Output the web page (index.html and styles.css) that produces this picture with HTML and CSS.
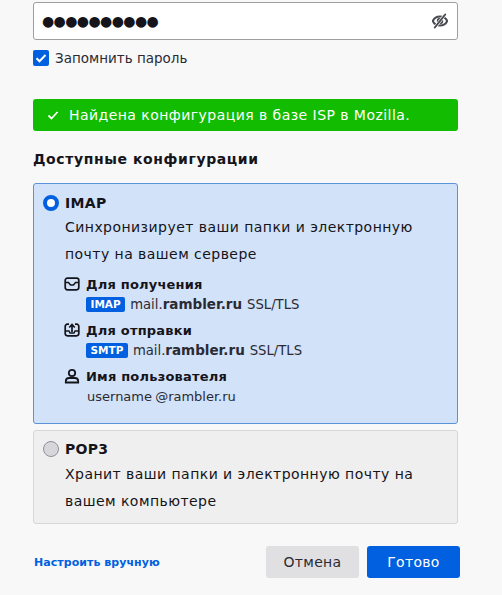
FILE: index.html
```html
<!DOCTYPE html>
<html lang="ru">
<head>
<meta charset="utf-8">
<title>Настройка почты</title>
<link rel="stylesheet" href="styles.css">
</head>
<body>
<main class="page">
  <div class="pass-input">
    <span class="dots">●●●●●●●●●●</span>
    <svg class="eye" viewBox="0 0 16 16" width="16" height="16"><path d="M8 3.500C4.500 3.500 1.800 5.600.8 8c1 2.400 3.700 4.500 7.200 4.500s6.200-2.100 7.200-4.500C14.200 5.600 11.500 3.500 8 3.500Z" fill="none" stroke="#4a4a52" stroke-width="2"/><circle cx="8" cy="8" r="3.200" fill="#4a4a52"/><path d="M2.500 15 13.500 1" stroke="#fff" stroke-width="3"/><path d="M2.800 14.500 13.200 1.500" stroke="#4a4a52" stroke-width="2" stroke-linecap="round"/></svg>
  </div>
  <label class="remember">
    <span class="checkbox"><svg viewBox="0 0 16 16" width="16" height="16"><path d="M3.500 8.200 6.500 11.200 12.500 5" fill="none" stroke="#fff" stroke-width="2"/></svg></span>
    Запомнить пароль
  </label>
  <div class="notice">
    <svg viewBox="0 0 12 12" width="12" height="12"><path d="M1.500 6.500 4.500 9.500 10.500 3" fill="none" stroke="#fff" stroke-width="1.800"/></svg>
    <span>Найдена конфигурация в базе ISP в Mozilla.</span>
  </div>
  <h2 class="section-title">Доступные конфигурации</h2>

  <section class="option selected">
    <div class="option-head"><span class="radio on"></span><strong>IMAP</strong></div>
    <p class="desc">Синхронизирует ваши папки и электронную почту на вашем сервере</p>
    <div class="details">
      <div class="detail-title">
        <svg viewBox="0 0 16 16" width="16" height="16"><rect x="1.200" y="2.200" width="13.600" height="11.600" rx="2.200" fill="none" stroke="#15141a" stroke-width="1.700"/><path d="M1.500 6.500H4.500L6.500 9H9.500L11.500 6.500H14.500" fill="none" stroke="#15141a" stroke-width="1.500"/></svg>
        Для получения
      </div>
      <div class="server"><span class="badge">IMAP</span><span>mail.<b>rambler.ru</b></span><span>SSL/TLS</span></div>
      <div class="detail-title gap">
        <svg viewBox="0 0 16 16" width="16" height="16"><path d="M5 2.200H3.400a2.200 2.200 0 0 0-2.200 2.200v7.200a2.200 2.200 0 0 0 2.200 2.200h9.200a2.200 2.200 0 0 0 2.200-2.200V4.400a2.200 2.200 0 0 0-2.200-2.200H11" fill="none" stroke="#15141a" stroke-width="1.700"/><path d="M8 10V3M5.200 5.500 8 2.500l2.800 3" fill="none" stroke="#15141a" stroke-width="1.700"/><path d="M1.500 9H5L6 11H10L11 9H14.500" fill="none" stroke="#15141a" stroke-width="1.400"/></svg>
        Для отправки
      </div>
      <div class="server"><span class="badge">SMTP</span><span>mail.<b>rambler.ru</b></span><span>SSL/TLS</span></div>
      <div class="detail-title gap">
        <svg viewBox="0 0 16 16" width="16" height="16"><circle cx="8" cy="5" r="3.200" fill="none" stroke="#15141a" stroke-width="1.800"/><path d="M1.800 14.500v-1.200a3.400 3.400 0 0 1 3.400-3.300h5.600a3.400 3.400 0 0 1 3.400 3.300v1.200Z" fill="none" stroke="#15141a" stroke-width="1.800"/></svg>
        Имя пользователя
      </div>
      <div class="server user">username @rambler.ru</div>
    </div>
  </section>

  <section class="option plain">
    <div class="option-head"><span class="radio"></span><strong>POP3</strong></div>
    <p class="desc">Хранит ваши папки и электронную почту на вашем компьютере</p>
  </section>

  <footer class="actions">
    <a class="manual" href="#">Настроить вручную</a>
    <div class="buttons">
      <button class="btn cancel" type="button">Отмена</button>
      <button class="btn done" type="button">Готово</button>
    </div>
  </footer>
</main>
</body>
</html>
```

FILE: styles.css
```css
* { box-sizing: border-box; }
html, body { margin: 0; height: 595px; overflow: hidden; }
body {
  background: #f8f8f8;
  color: #15141a;
  font-family: "DejaVu Sans", sans-serif;
  font-size: 14px;
}
.page { padding: 0 44px 0 33px; width: 502px; }
.pass-input {
  height: 38px;
  margin-top: 2px;
  border: 1px solid #9e9ea0;
  border-radius: 3px;
  background: #fff;
  display: flex;
  align-items: center;
  justify-content: space-between;
  padding: 0 9px 0 8px;
}
.dots { font-size: 14px; letter-spacing: -.6px; line-height: 1; }
.remember {
  display: flex;
  align-items: center;
  gap: 6px;
  margin-top: 10px;
  font-size: 13.500px;
  color: #2b2a33;
  height: 16px;
}
.checkbox {
  width: 16px;
  height: 16px;
  border-radius: 2px;
  background: #0060df;
  display: block;
}
.checkbox svg { display: block; }
.notice {
  margin-top: 33px;
  height: 32px;
  background: #12bc00;
  border-radius: 3px;
  color: #fff;
  display: flex;
  align-items: center;
  gap: 10px;
  padding-left: 14px;
  font-size: 14px;
  letter-spacing: .45px;
}
.section-title {
  margin: 18px 0 0;
  font-size: 14px;
  font-weight: 700;
  line-height: 20px;
  letter-spacing: .6px;
}
.option {
  border-radius: 3px;
  padding: 9px 9px 0;
}
.selected {
  margin-top: 14px;
  height: 241px;
  background: #d1e2f9;
  border: 1px solid #5b93d8;
}
.selected .desc { padding-top: 1px; }
.plain {
  margin-top: 6px;
  height: 94px;
  background: #efefef;
  border: 1px solid #d7d7db;
  padding-top: 8px;
}
.option-head {
  display: flex;
  align-items: center;
  gap: 6px;
  height: 20px;
  font-size: 14px;
}
.option-head strong { letter-spacing: .3px; }
.radio {
  width: 16px;
  height: 16px;
  border-radius: 50%;
  background: #d7d7db;
  border: 1px solid #8f8f9d;
}
.radio.on { background: #fff; border: 4px solid #0060df; }
.desc {
  margin: 0 0 0 22px;
  padding-top: 2px;
  font-size: 14px;
  line-height: 27px;
  letter-spacing: .45px;
}
.details { margin: 6px 0 0 21px; }
.detail-title {
  display: flex;
  align-items: center;
  gap: 6px;
  height: 20px;
  font-size: 13px;
  font-weight: 700;
  letter-spacing: .2px;
}
.detail-title.gap { margin-top: 6px; }
.server {
  display: flex;
  align-items: center;
  gap: 5px;
  margin-left: 22px;
  height: 20px;
  font-size: 13.200px;
  color: #2b2a33;
}
.server.user {
  display: block;
  font-size: 13px;
  line-height: 20px;
  margin-top: 1px;
  padding-left: 1px;
  word-spacing: -1px;
}
.server b { font-size: 13.500px; }
.badge {
  background: #0060df;
  color: #fff;
  font-size: 10.500px;
  font-weight: 700;
  border-radius: 2px;
  line-height: 15px;
  padding: 0 4.500px;
}
.actions {
  margin-top: 22px;
  display: flex;
  align-items: center;
  justify-content: space-between;
  margin-right: -2px;
}
.manual {
  color: #0060df;
  font-size: 11px;
  font-weight: 700;
  text-decoration: none;
  margin-left: 1px;
  letter-spacing: .05px;
}
.buttons { display: flex; gap: 8px; }
.btn {
  width: 93px;
  height: 32px;
  border: 0;
  border-radius: 3px;
  font-family: inherit;
  font-size: 14px;
  letter-spacing: .3px;
}
.cancel { background: #e0e0e2; color: #2b2a33; }
.done { background: #0060df; color: #fff; }
```
